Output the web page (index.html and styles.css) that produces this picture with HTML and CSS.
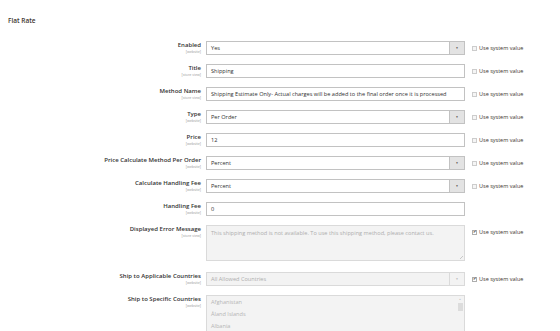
FILE: index.html
```html
<!DOCTYPE html>
<html lang="en">
  <head>
    <meta charset="UTF-8" />
    <title>Flat Rate</title>
    <link rel="stylesheet" href="styles.css">
  </head>
  <body>
    <h2 class="section-title">Flat Rate</h2>
    <div class="config-form">
      <div class="row">
        <div class="label">Enabled<span class="scope">[website]</span></div>
        <div class="control select"><span class="value">Yes</span><span class="arrow">&#9660;</span></div>
        <label class="use-default"><span class="checkbox"></span>Use system value</label>
      </div>
      <div class="row">
        <div class="label">Title<span class="scope">[store view]</span></div>
        <div class="control"><span class="value">Shipping</span></div>
        <label class="use-default"><span class="checkbox"></span>Use system value</label>
      </div>
      <div class="row">
        <div class="label">Method Name<span class="scope">[store view]</span></div>
        <div class="control"><span class="value">Shipping Estimate Only- Actual charges will be added to the final order once it is processed</span></div>
        <label class="use-default"><span class="checkbox"></span>Use system value</label>
      </div>
      <div class="row">
        <div class="label">Type<span class="scope">[website]</span></div>
        <div class="control select"><span class="value">Per Order</span><span class="arrow">&#9660;</span></div>
        <label class="use-default"><span class="checkbox"></span>Use system value</label>
      </div>
      <div class="row">
        <div class="label">Price<span class="scope">[website]</span></div>
        <div class="control"><span class="value">12</span></div>
        <label class="use-default"><span class="checkbox"></span>Use system value</label>
      </div>
      <div class="row">
        <div class="label">Price Calculate Method Per Order<span class="scope">[website]</span></div>
        <div class="control select"><span class="value">Percent</span><span class="arrow">&#9660;</span></div>
        <label class="use-default"><span class="checkbox"></span>Use system value</label>
      </div>
      <div class="row">
        <div class="label">Calculate Handling Fee<span class="scope">[website]</span></div>
        <div class="control select"><span class="value">Percent</span><span class="arrow">&#9660;</span></div>
        <label class="use-default"><span class="checkbox"></span>Use system value</label>
      </div>
      <div class="row">
        <div class="label">Handling Fee<span class="scope">[website]</span></div>
        <div class="control"><span class="value">0</span></div>
        <div class="use-default"></div>
      </div>
      <div class="row row-tall">
        <div class="label">Displayed Error Message<span class="scope">[store view]</span></div>
        <div class="control textarea disabled">
          <span class="value">This shipping method is not available. To use this shipping method, please contact us.</span>
          <span class="resize"></span>
        </div>
        <label class="use-default"><span class="checkbox checked">&#10004;</span>Use system value</label>
      </div>
      <div class="row">
        <div class="label">Ship to Applicable Countries<span class="scope">[website]</span></div>
        <div class="control select disabled"><span class="value">All Allowed Countries</span><span class="arrow">&#9660;</span></div>
        <label class="use-default"><span class="checkbox checked">&#10004;</span>Use system value</label>
      </div>
      <div class="row">
        <div class="label">Ship to Specific Countries<span class="scope">[website]</span></div>
        <div class="control multiselect disabled">
          <ul class="options">
            <li>Afghanistan</li>
            <li>Åland Islands</li>
            <li>Albania</li>
          </ul>
          <div class="scrollbar"><span class="scroll-up">&#9650;</span><span class="thumb"></span></div>
        </div>
        <div class="use-default"></div>
      </div>
    </div>
  </body>
</html>
```

FILE: styles.css
```css
* {
  margin: 0;
  padding: 0;
  box-sizing: border-box;
}

body {
  font-family: "Open Sans", "Noto Sans", sans-serif;
  background: #ffffff;
  color: #303030;
  height: 331px;
  overflow: hidden;
}

.section-title {
  font-size: 6.5px;
  font-weight: 600;
  color: #41362f;
  padding: 17px 0 0 8px;
  line-height: 8px;
  height: 41px;
}

.row {
  display: flex;
  align-items: flex-start;
  margin-bottom: 9px;
}

.row-tall {
  margin-bottom: 11px;
}

.label {
  width: 206px;
  padding-right: 5px;
  padding-top: 1px;
  text-align: right;
  font-size: 6px;
  font-weight: 600;
  line-height: 7px;
  color: #333333;
}

.scope {
  display: block;
  font-size: 3.6px;
  font-weight: 400;
  line-height: 5px;
  color: #999999;
}

.control {
  width: 259px;
  height: 14px;
  border: 1px solid #c2c2c2;
  background: #ffffff;
  display: flex;
  align-items: center;
  font-size: 5.6px;
  color: #303030;
  position: relative;
}

.control .value {
  flex: 1;
  padding-left: 4px;
  white-space: nowrap;
  overflow: hidden;
}

.select .arrow {
  width: 15px;
  height: 100%;
  background: #e3e3e3;
  border-left: 1px solid #c2c2c2;
  display: flex;
  align-items: center;
  justify-content: center;
  font-size: 3px;
  color: #514943;
}

.disabled {
  background: #f3f3f3;
  border-color: #dadada;
  color: #adadad;
}

.disabled.select .arrow {
  background: #f3f3f3;
  border-left-color: #dadada;
  color: #b5b5b5;
}

.textarea {
  height: 36px;
  align-items: flex-start;
}

.textarea .value {
  padding-top: 3px;
  white-space: normal;
}

.resize {
  position: absolute;
  right: 1px;
  bottom: 1px;
  width: 3px;
  height: 3px;
  background: linear-gradient(135deg, transparent 45%, #c8c8c8 45%, #c8c8c8 60%, transparent 60%);
}

.multiselect {
  height: 50px;
  align-items: flex-start;
  overflow: hidden;
}

.options {
  list-style: none;
  flex: 1;
  padding: 0 0 0 4px;
  font-size: 5.6px;
  line-height: 12px;
  color: #b5b5b5;
}

.scrollbar {
  width: 8px;
  display: flex;
  flex-direction: column;
  align-items: center;
  padding-top: 1px;
}

.scroll-up {
  font-size: 2.5px;
  line-height: 4px;
  color: #c4c4c4;
}

.thumb {
  width: 5px;
  height: 8px;
  background: #dcdcdc;
  margin-top: 2px;
}

.use-default {
  margin-left: 7px;
  display: flex;
  align-items: center;
  height: 14px;
  font-size: 5.5px;
  color: #41362f;
}

.checkbox {
  width: 5px;
  height: 5px;
  border: 1px solid #cccccc;
  background: #f5f5f5;
  margin-right: 2px;
  display: flex;
  align-items: center;
  justify-content: center;
  font-size: 4px;
  line-height: 1;
}

.checkbox.checked {
  background: #ffffff;
  border-color: #adadad;
  color: #303030;
}
```
